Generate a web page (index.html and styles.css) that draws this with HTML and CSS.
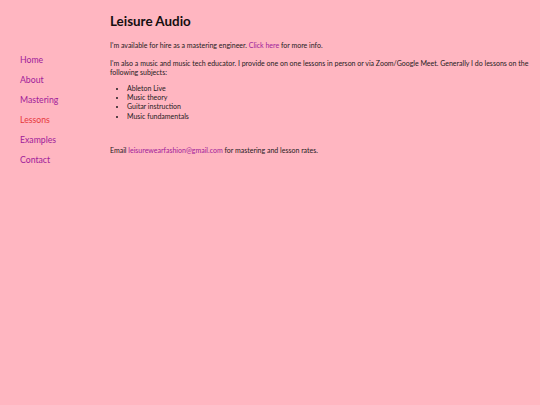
FILE: index.html
```html
<!DOCTYPE html>
<html>
<head>
<meta charset="utf-8">
<link rel="stylesheet" href="styles.css">
</head>
<body>
<div class="page">
  <nav class="nav">
    <a href="#" class="nav-link">Home</a>
    <a href="#" class="nav-link">About</a>
    <a href="#" class="nav-link">Mastering</a>
    <a href="#" class="nav-link current">Lessons</a>
    <a href="#" class="nav-link">Examples</a>
    <a href="#" class="nav-link">Contact</a>
  </nav>
  <main class="main">
    <h1 class="title">Leisure Audio</h1>
    <p class="text">I'm available for hire as a mastering engineer. <a href="#" class="link">Click here</a> for more info.</p>
    <p class="text intro">I'm also a music and music tech educator. I provide one on one lessons in person or via Zoom/Google Meet. Generally I do lessons on the following subjects:</p>
    <ul class="list">
      <li>Ableton Live</li>
      <li>Music theory</li>
      <li>Guitar instruction</li>
      <li>Music fundamentals</li>
    </ul>
    <p class="text email">Email <a href="#" class="link">leisurewearfashion@gmail.com</a> for mastering and lesson rates.</p>
  </main>
</div>
</body>
</html>
```
FILE: styles.css
```css
html, body {
  margin: 0;
  padding: 0;
  background: #ffb6c1;
}
body {
  font-family: Lato, "Open Sans", sans-serif;
  color: #1e1a1c;
}
.page {
  display: flex;
}
.nav {
  width: 90px;
  padding: 53px 0 0 20px;
  display: flex;
  flex-direction: column;
  gap: 7px;
}
.nav-link {
  font-size: 8.7px;
  line-height: 13px;
  color: #a0209a;
  text-decoration: none;
}
.nav-link.current {
  color: #e8383c;
}
.main {
  flex: 1;
  padding: 11px 8px 0 0;
}
.title {
  margin: 0 0 9.5px;
  font-size: 13.4px;
  line-height: 20px;
  font-weight: 700;
  color: #140e10;
}
.text {
  margin: 0 0 9px;
  font-size: 7px;
  line-height: 9.2px;
}
.text.intro {
  margin-bottom: 6.5px;
}
.link {
  color: #a0209a;
  text-decoration: none;
}
.list {
  margin: 0;
  padding-left: 17px;
  font-size: 7px;
  line-height: 9.3px;
}
.email {
  margin-top: 25.5px;
}
```
